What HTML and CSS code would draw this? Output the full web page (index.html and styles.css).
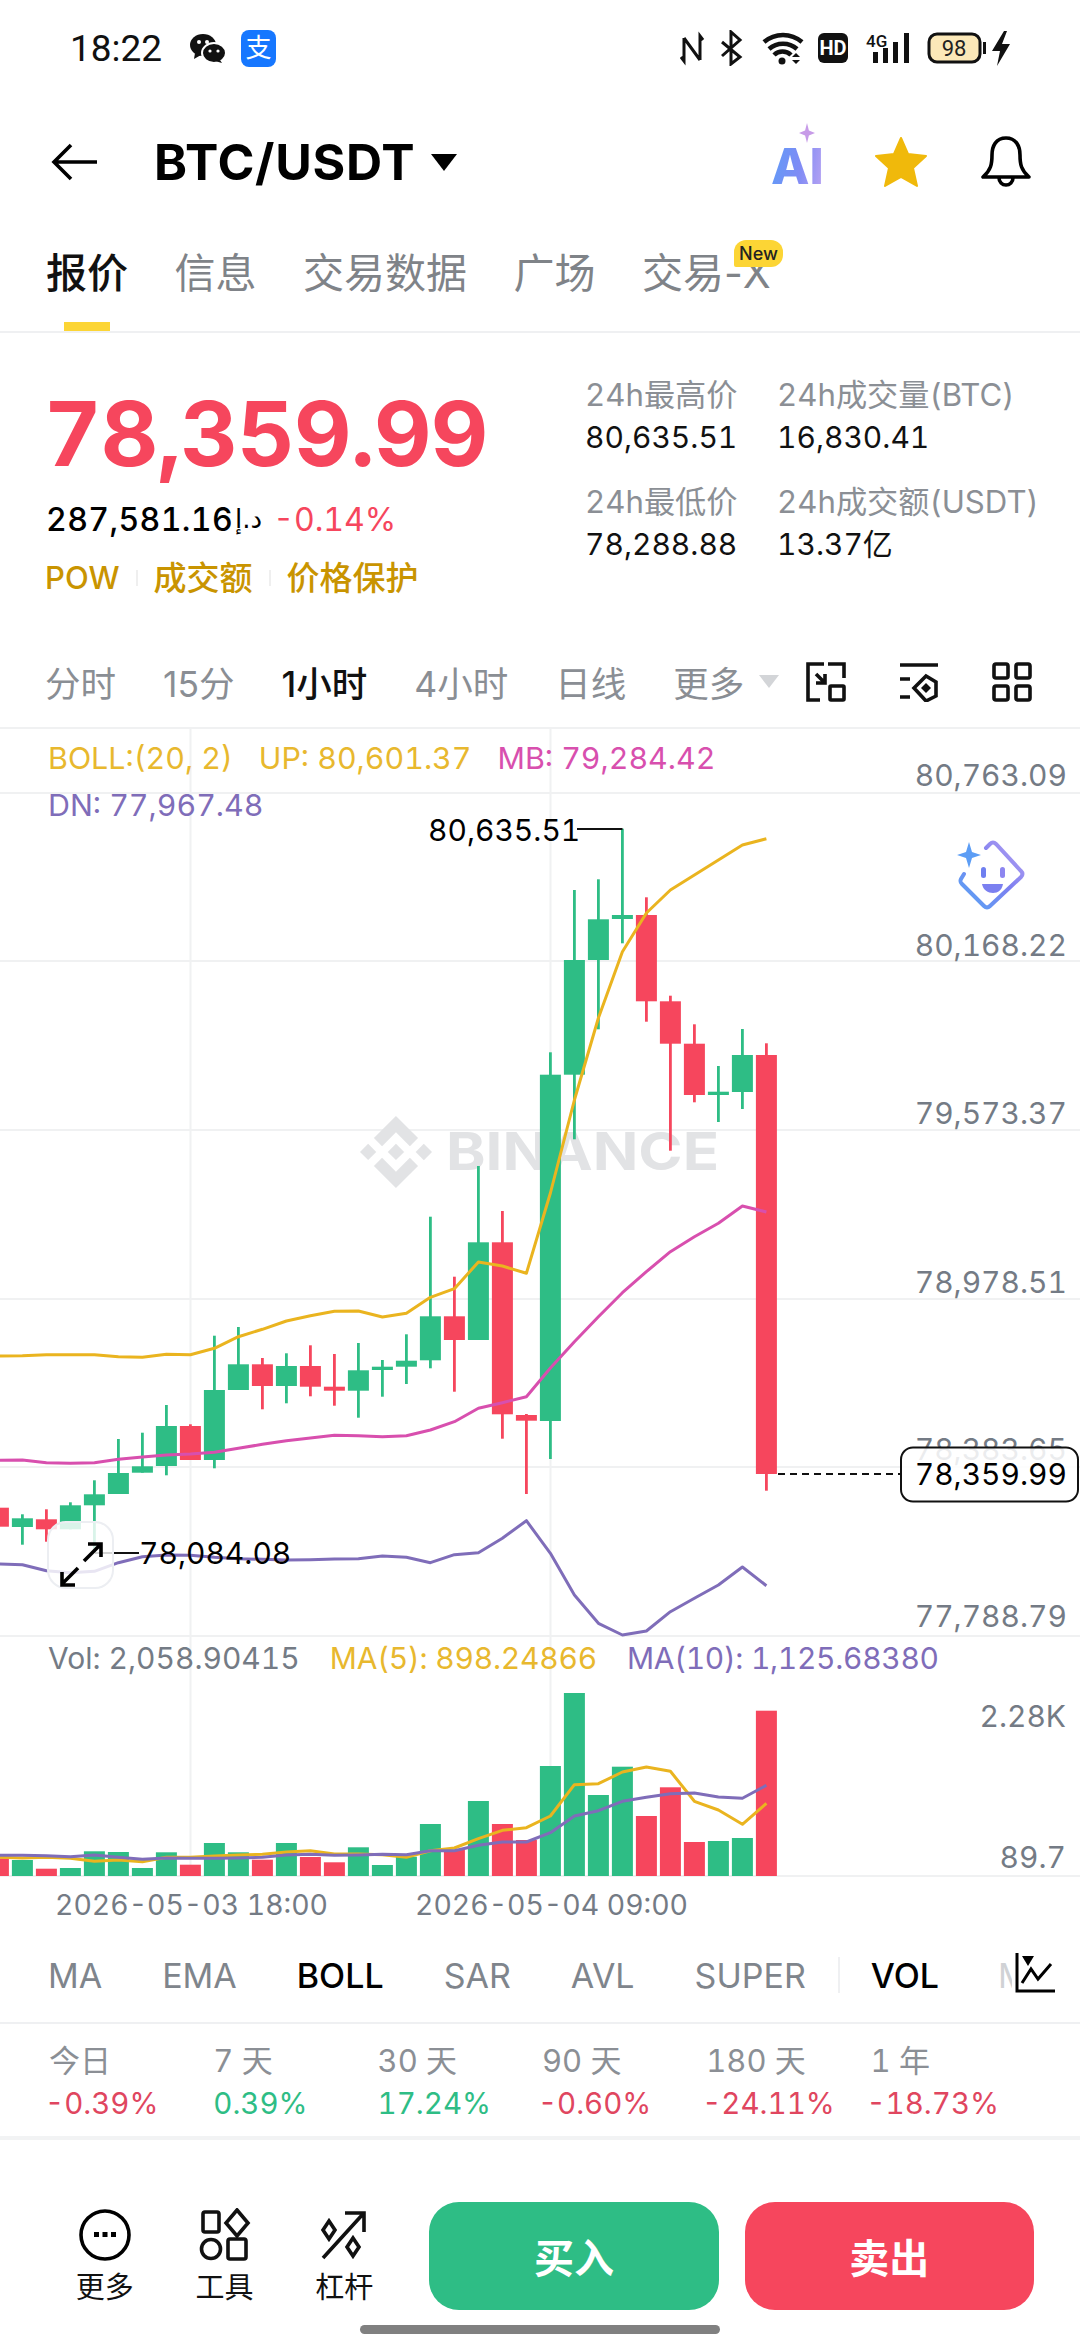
FILE: index.html
```html
<!DOCTYPE html>
<html lang="zh">

<head>
    <meta charset="UTF-8">
    <meta name="viewport" content="width=device-width, initial-scale=1.0">
    <title>BTC/USDT</title>
    <link rel="stylesheet" href="styles.css">
</head>

<body>
    <div class="status-bar">
        <div class="status-left">
            <span class="clock">18:22</span>
            <svg class="wechat" viewBox="0 0 36 30" width="36" height="30">
                <ellipse cx="13" cy="12" rx="13" ry="11" fill="#111" />
                <path d="M5 20l-1 6 7-4z" fill="#111" />
                <ellipse cx="24" cy="20" rx="12" ry="10" fill="#111" stroke="#fff" stroke-width="2" />
                <path d="M30 27l2 3-7-2z" fill="#111" />
                <circle cx="9" cy="9" r="2" fill="#fff" />
                <circle cx="17" cy="9" r="2" fill="#fff" />
                <circle cx="20" cy="18" r="1.6" fill="#fff" />
                <circle cx="28" cy="18" r="1.6" fill="#fff" />
            </svg>
            <span class="alipay">支</span>
        </div>
        <svg class="status-icons" viewBox="680 30 332 36" width="332" height="36">
            <path class="si" d="M684 38v23l-3-4M684 38l16 22M700 60V36l3 4" />
            <path class="si" d="M722 42l18 15-9 7V32l9 8-18 16" />
            <path class="si thick" d="M764 42a29 29 0 0 1 38 0M769 49a21 21 0 0 1 28 0M774 55a12 12 0 0 1 17 0" />
            <circle cx="782" cy="61" r="3.500" fill="#111" />
            <path d="M796 53l4 4h-8zM796 64l4-4h-8z" fill="#111" />
            <rect x="818" y="33" width="30" height="30" rx="6" fill="#111" />
            <text class="hd" x="833" y="55" text-anchor="middle">HD</text>
            <text class="four-g" x="866" y="47">4G</text>
            <path d="M873 52h5v11h-5zM883 48h5v15h-5zM893 42h5v21h-5zM904 33h5v30h-5z" fill="#111" />
            <rect x="929" y="34" width="51" height="28" rx="8" fill="#fbe8b8" stroke="#111" stroke-width="3" />
            <text class="batt" x="954" y="56" text-anchor="middle">98</text>
            <rect x="983" y="42" width="3" height="12" fill="#111" />
            <path d="M1004 31l-12 20h8l-3 15 13-22h-8l5-13z" fill="#111" />
        </svg>
    </div>

    <header class="topbar">
        <svg class="back" viewBox="0 0 48 40" width="48" height="40">
            <path d="M46 20H4M20 3L3 20l17 17" fill="none" stroke="#000" stroke-width="3.6" />
        </svg>
        <h1 class="pair">BTC/USDT</h1>
        <span class="caret"></span>
        <div class="top-actions">
            <span class="ai">AI<i class="ai-spark"></i></span>
            <svg viewBox="0 0 52 50" width="52" height="50">
                <path d="M26 1l7 16 18 2-13 12 4 18-16-9-16 9 4-18L1 19l18-2z" fill="#f0b90b" stroke="#f0b90b" stroke-linejoin="round" stroke-width="2" />
            </svg>
            <svg viewBox="0 0 54 54" width="54" height="54">
                <path d="M27 3c-10 0-14 8-14 17 0 9-1 15-9 22h46c-8-7-9-13-9-22 0-9-4-17-14-17zM20 43a7 7 0 0 0 14 0" fill="none" stroke="#000" stroke-width="3.6" stroke-linejoin="round" />
            </svg>
        </div>
    </header>

    <nav class="tabs">
        <a class="tab active">报价</a>
        <a class="tab">信息</a>
        <a class="tab">交易数据</a>
        <a class="tab">广场</a>
        <a class="tab new">交易-X<span class="new-badge">New</span></a>
    </nav>

    <section class="summary">
        <div class="summary-left">
            <div class="last-price">78,359.99</div>
            <div class="sub-price"><span class="fiat">287,581.16</span><span class="aed">د.إ</span><span class="change">-0.14%</span></div>
            <div class="tags"><span class="pow">POW</span><i></i><span>成交额</span><i></i><span>价格保护</span></div>
        </div>
        <div class="stats">
            <div class="stat"><p>24h最高价</p><b>80,635.51</b></div>
            <div class="stat"><p>24h成交量(BTC)</p><b>16,830.41</b></div>
            <div class="stat"><p>24h最低价</p><b>78,288.88</b></div>
            <div class="stat"><p>24h成交额(USDT)</p><b>13.37亿</b></div>
        </div>
    </section>

    <div class="timeframes">
        <span class="tf first">分时</span>
        <span class="tf">15分</span>
        <span class="tf on">1小时</span>
        <span class="tf">4小时</span>
        <span class="tf">日线</span>
        <span class="tf">更多</span>
        <span class="tf-caret"></span>
        <div class="tf-icons">
            <svg viewBox="0 0 40 40" width="40" height="40">
                <path class="ic" d="M18 2H2v36h12M22 2h16v14M10 12l9 9M19 12v9h-9" />
                <rect class="ic" x="24" y="24" width="14" height="14" rx="1" />
            </svg>
            <svg viewBox="0 0 42 40" width="42" height="40">
                <path class="ic" d="M2 3h38M2 17h10M2 35h10M16 26l12-12 10 6v14l-10 5z" />
                <path d="M28 21l5 5-5 5-5-5z" fill="#111" />
            </svg>
            <svg viewBox="0 0 40 40" width="40" height="40">
                <rect class="ic" x="2" y="2" width="14" height="14" rx="2" />
                <rect class="ic" x="24" y="2" width="14" height="14" rx="2" />
                <rect class="ic" x="2" y="24" width="14" height="14" rx="2" />
                <rect class="ic" x="24" y="24" width="14" height="14" rx="2" />
            </svg>
        </div>
    </div>

    <section class="chart">
        <svg class="canvas" viewBox="0 727 1080 1197" width="1080" height="1197">
            <g class="grid">
                <path d="M0 793H1080M0 961H1080M0 1130H1080M0 1299H1080M0 1467H1080M0 1636H1080M0 1876H1080" />
                <path d="M190.5 727V1876M550.5 727V1876" />
            </g>
            <g class="watermark">
                <path transform="translate(360 1116) scale(3)" d="M16.624 13.9202l2.7175 2.7154-7.353 7.353-7.353-7.352 2.7175-2.7164 4.6355 4.6595 4.6356-4.6595zm4.6366-4.6366L24 12l-2.7154 2.7164L18.5682 12l2.6924-2.7164zm-9.272.001l2.7163 2.6914-2.7164 2.7174v-.001L9.2721 12l2.7164-2.7154zm-9.2722-.001L5.4088 12l-2.6914 2.6924L0 12l2.7164-2.7164zM11.9885.0115l7.353 7.329-2.7174 2.7154-4.6356-4.6356-4.6355 4.6595-2.7174-2.7154 7.353-7.353z" />
                <text x="446" y="1170" textLength="273" lengthAdjust="spacingAndGlyphs">BINANCE</text>
            </g>
            <g id="candles"></g>
            <g id="volumes"></g>
            <g id="lines"></g>

            <text class="axis" x="1067" y="786">80,763.09</text>
            <text class="axis" x="1067" y="956">80,168.22</text>
            <text class="axis" x="1067" y="1124">79,573.37</text>
            <text class="axis" x="1067" y="1293">78,978.51</text>
            <text class="axis" x="1067" y="1460">78,383.65</text>
            <text class="axis" x="1067" y="1627">77,788.79</text>
            <text class="axis" x="1066" y="1727">2.28K</text>
            <text class="axis" x="1066" y="1868">89.7</text>

            <text class="mark" x="428" y="841">80,635.51</text>
            <path class="mark-line" d="M577 829H622.500" />
            <text class="mark" x="139" y="1564">78,084.08</text>
            <path class="mark-line" d="M95 1553H139" />

            <path class="dash" d="M778 1474H900" />
            <rect class="price-tag" x="901" y="1447.500" width="177" height="54" rx="12" />
            <text class="tag-text" x="1067" y="1485">78,359.99</text>

            <rect class="zoom-btn" x="48" y="1522" width="65" height="66" rx="18" />
            <path class="zoom-arrows" d="M84 1561l16-16M88 1544h13v13M78 1568l-16 16M75 1585H62v-13" />

            <g transform="translate(957 841)">
                <defs>
                    <linearGradient id="faceg" x1="0" y1="1" x2="1" y2="0">
                        <stop offset="0" stop-color="#56a6f5" />
                        <stop offset=".55" stop-color="#7d7ff0" />
                        <stop offset="1" stop-color="#b9a3f2" />
                    </linearGradient>
                </defs>
                <path d="M7 33l-3 5c-1 2-1 3 1 5l22 22c2 2 4 2 6 0l31-29c2-2 2-4 0-6L39 3c-2-2-4-2-6 0l-4 4" fill="none" stroke="url(#faceg)" stroke-width="4" stroke-linecap="round" />
                <path d="M12 1l3 10 9 3-9 3-3 10-3-10-9-3 9-3z" fill="#5c9df5" />
                <rect x="24" y="26" width="5" height="11" rx="2.500" fill="#6f7ff0" />
                <rect x="43" y="26" width="5" height="11" rx="2.500" fill="#8d86f0" />
                <path d="M25 43h21c-1 6-5 9-10 9s-10-3-11-9z" fill="#7b80f0" />
            </g>

            <text class="date" x="55" y="1915">2026-05-03 18:00</text>
            <text class="date" x="415" y="1915">2026-05-04 09:00</text>
        </svg>
        <div class="legend">
            <div class="legend-row"><span class="c-gold">BOLL:(20, 2)</span><span class="c-gold">UP: 80,601.37</span><span class="c-pink">MB: 79,284.42</span></div>
            <div class="legend-row"><span class="c-purple">DN: 77,967.48</span></div>
        </div>
        <div class="legend vol-legend">
            <div class="legend-row"><span class="c-gray">Vol: 2,058.90415</span><span class="c-gold">MA(5): 898.24866</span><span class="c-purple">MA(10): 1,125.68380</span></div>
        </div>
    </section>

    <div class="indicators">
        <span class="ind">MA</span>
        <span class="ind">EMA</span>
        <span class="ind on">BOLL</span>
        <span class="ind">SAR</span>
        <span class="ind">AVL</span>
        <span class="ind">SUPER</span>
        <i class="ind-sep"></i>
        <span class="ind on">VOL</span>
        <span class="ind cut">M</span>
        <svg class="ind-icon" viewBox="0 0 42 42" width="42" height="42">
            <path d="M3 1V39H41" fill="none" stroke="#000" stroke-width="3" />
            <path d="M8 31l9-14 7 10 13-15" fill="none" stroke="#000" stroke-width="3" />
            <path d="M8 4h12l-6 10z" fill="#000" />
        </svg>
    </div>

    <div class="periods">
        <div class="period"><p>今日</p><span class="down">-0.39%</span></div>
        <div class="period"><p>7 天</p><span class="up">0.39%</span></div>
        <div class="period"><p>30 天</p><span class="up">17.24%</span></div>
        <div class="period"><p>90 天</p><span class="down">-0.60%</span></div>
        <div class="period"><p>180 天</p><span class="down">-24.11%</span></div>
        <div class="period"><p>1 年</p><span class="down">-18.73%</span></div>
    </div>

    <footer class="bottom">
        <div class="tool">
            <svg viewBox="0 0 54 54" width="54" height="54">
                <circle cx="27" cy="27" r="24" fill="none" stroke="#000" stroke-width="3.600" />
                <path d="M16 24h5v5h-5zM24.500 24h5v5h-5zM33 24h5v5h-5z" fill="#000" />
            </svg>
            <span>更多</span>
        </div>
        <div class="tool">
            <svg viewBox="0 0 54 54" width="54" height="54">
                <rect class="ic" x="5" y="4" width="16" height="20" rx="2" />
                <path class="ic" d="M39 2l11 13-11 13-11-13z" />
                <circle class="ic" cx="13" cy="41" r="9.500" />
                <rect class="ic" x="30" y="31" width="18" height="20" rx="2" />
            </svg>
            <span>工具</span>
        </div>
        <div class="tool">
            <svg viewBox="0 0 54 54" width="54" height="54">
                <path class="ic" d="M6 50L46 6M28 5h19v19" />
                <path class="ic" d="M12 13l6 9-6 9-6-9zM36 30l6 9-6 9-6-9z" />
            </svg>
            <span>杠杆</span>
        </div>
        <button class="trade buy">买入</button>
        <button class="trade sell">卖出</button>
    </footer>
    <div class="home-bar"></div>

    <script src="chart.js"></script>
</body>

</html>
```

FILE: styles.css
```css
* {
    box-sizing: border-box;
}

body {
    margin: 0;
    width: 1080px;
    height: 2340px;
    overflow: hidden;
    background: #fff;
    color: #000;
    font-family: Inter, "Noto Sans CJK SC", sans-serif;
    font-variant-numeric: tabular-nums;
    position: relative;
}

p,
h1 {
    margin: 0;
}

/* status bar */
.status-bar {
    height: 96px;
    padding: 0 68px 0 70px;
    display: flex;
    align-items: center;
    justify-content: space-between;
}

.status-left {
    display: flex;
    align-items: center;
}

.clock {
    font-family: Roboto, sans-serif;
    font-size: 37px;
    color: #111;
    width: 120px;
}

.wechat {
    margin-right: 15px;
}

.alipay {
    width: 35px;
    height: 37px;
    background: #1677ff;
    border-radius: 8px;
    color: #fff;
    font-size: 26px;
    line-height: 36px;
    text-align: center;
}

.si {
    fill: none;
    stroke: #111;
    stroke-width: 3;
}

.si.thick {
    stroke-width: 4.5;
}

.hd {
    font: 700 20px "Roboto", sans-serif;
    fill: #fff;
}

.four-g {
    font: 500 17px "Roboto", sans-serif;
    fill: #111;
}

.batt {
    font: 400 22px "Roboto", sans-serif;
    fill: #222;
}

/* top bar */
.topbar {
    height: 132px;
    padding: 0 47px 0 51px;
    display: flex;
    align-items: center;
}

.pair {
    margin-left: 55px;
    font-size: 50px;
    font-weight: 700;
    letter-spacing: 0.7px;
}

.caret {
    margin-left: 16px;
    border-left: 13px solid transparent;
    border-right: 13px solid transparent;
    border-top: 17px solid #000;
}

.top-actions {
    margin-left: auto;
    display: flex;
    align-items: center;
    gap: 52px;
}

.ai {
    position: relative;
    font-size: 50px;
    font-weight: 800;
    line-height: 50px;
    width: 52px;
    margin-top: 8px;
    background: linear-gradient(100deg, #5e9cf7, #7f8bf5 55%, #b9a3f2);
    -webkit-background-clip: text;
    background-clip: text;
    color: transparent;
}

.ai-spark {
    position: absolute;
    right: 8px;
    top: -18px;
    width: 16px;
    height: 20px;
    background: #c79be8;
    clip-path: polygon(50% 0, 62% 38%, 100% 50%, 62% 62%, 50% 100%, 38% 62%, 0 50%, 38% 38%);
}

/* tabs */
.tabs {
    height: 105px;
    padding: 0 0 0 46px;
    display: flex;
    gap: 46.500px;
    font-variant-numeric: normal;
    border-bottom: 2px solid #eff0f2;
}

.tab {
    position: relative;
    font-size: 41px;
    line-height: 90px;
    color: #7f8388;
    height: 103px;
}

.tab.active {
    color: #111;
    font-weight: 500;
}

.tab.active::after {
    content: "";
    position: absolute;
    left: 18px;
    bottom: 0;
    width: 46px;
    height: 9px;
    background: #fcd535;
}

.new-badge {
    position: absolute;
    right: -12px;
    top: 12px;
    padding: 0 5px;
    height: 27px;
    line-height: 27px;
    font-size: 18px;
    font-weight: 500;
    color: #222;
    background: #fcd535;
    border-radius: 12px 12px 12px 2px;
}

/* price summary */
.summary {
    height: 307px;
    padding: 0 0 0 46px;
    display: flex;
}

.summary-left {
    width: 539px;
    padding-top: 48px;
}

.last-price {
    margin-left: -2px;
    font-size: 89px;
    line-height: 106px;
    font-weight: 700;
    color: #f6465d;
    letter-spacing: -0.8px;
}

.sub-price {
    margin-top: 10px;
    display: flex;
    align-items: center;
    height: 44px;
}

.fiat {
    font-size: 32px;
    font-weight: 500;
    letter-spacing: 0.4px;
}

.aed {
    font-family: "DejaVu Sans", sans-serif;
    font-size: 26px;
    margin: 0 11px 0 2px;
}

.change {
    font-size: 32px;
    color: #f6465d;
}

.tags {
    margin: 15px 0 0 -1px;
    display: flex;
    align-items: center;
    font-size: 33px;
    font-weight: 500;
    line-height: 44px;
    color: #c99400;
}

.tags .pow {
    font-size: 31px;
}

.tags i {
    width: 2px;
    height: 16px;
    margin: 0 16px;
    background: #efefef;
}

.stats {
    display: grid;
    grid-template-columns: 192px auto;
    grid-auto-rows: 107px;
    padding-top: 40px;
}

.stat p {
    font-size: 31.200px;
    line-height: 44px;
    color: #8b8f95;
}

.stat b {
    display: block;
    margin-top: -2px;
    font-size: 30px;
    line-height: 44px;
    font-weight: 400;
    color: #111;
}

/* timeframe row */
.timeframes {
    height: 87px;
    padding: 0 48px 4px 45px;
    display: flex;
    align-items: center;
    font-size: 35.500px;
    font-variant-numeric: normal;
    color: #8a8e94;
}

.tf {
    margin-right: 47px;
    white-space: nowrap;
    flex-shrink: 0;
}

.tf.on {
    color: #111;
    font-weight: 500;
}

.tf:nth-of-type(6) {
    margin-right: 15px;
}

.tf-caret {
    border-left: 10px solid transparent;
    border-right: 10px solid transparent;
    border-top: 13px solid #d3d5d8;
}

.tf-icons {
    margin-left: auto;
    display: flex;
    gap: 52px;
}

.ic {
    fill: none;
    stroke: #111;
    stroke-width: 3.6;
}

/* chart */
.chart {
    position: relative;
    height: 1197px;
    border-top: 2px solid #f0f1f2;
}

.canvas {
    position: absolute;
    left: 0;
    top: -2px;
}

.grid path {
    stroke: #f0f1f2;
    stroke-width: 2;
    fill: none;
}

.watermark {
    fill: #e2e3e5;
}

.watermark text {
    font-size: 52px;
    font-weight: 700;
}

.axis {
    font-size: 30px;
    fill: #747b85;
    text-anchor: end;
}

.mark {
    font-size: 30px;
    fill: #000;
}

.mark-line {
    stroke: #111;
    stroke-width: 2;
}

.dash {
    stroke: #111;
    stroke-width: 2;
    stroke-dasharray: 7 5;
}

.price-tag {
    fill: rgba(255, 255, 255, 0.86);
    stroke: #111;
    stroke-width: 2;
}

.tag-text {
    font-size: 30px;
    fill: #000;
    text-anchor: end;
}

.zoom-btn {
    fill: rgba(255, 255, 255, 0.82);
    stroke: #eceef2;
    stroke-width: 2;
}

.zoom-arrows {
    fill: none;
    stroke: #000;
    stroke-width: 3.600;
}

.date {
    font-size: 28.400px;
    fill: #747b85;
}

.legend {
    position: absolute;
    left: 48px;
    top: 6px;
    font-size: 30.400px;
    line-height: 47px;
}

.legend-row {
    display: flex;
    gap: 26px;
}

.vol-legend {
    top: 906px;
    line-height: 46px;
    font-size: 30px;
}

.vol-legend .legend-row {
    gap: 30px;
}

.vol-legend .c-gold {
    letter-spacing: -0.2px;
}

.vol-legend .c-purple {
    letter-spacing: -0.3px;
}

.c-gold {
    color: #e8b82e;
}

.c-pink {
    color: #d84fae;
}

.c-purple {
    color: #7f6db9;
}

.c-gray {
    color: #747b85;
}

/* indicators */
.indicators {
    position: relative;
    height: 100px;
    padding: 4px 0 0 48px;
    display: flex;
    align-items: center;
    font-size: 34px;
    color: #7f858c;
    border-bottom: 2px solid #eff0f2;
}

.ind {
    margin-right: 60px;
}

.ind.on {
    color: #000;
    font-weight: 500;
}

.ind-sep {
    width: 2px;
    height: 36px;
    margin: 0 31px 0 -28px;
    background: #eff0f2;
}

.ind.cut {
    position: absolute;
    left: 998px;
    margin: 0;
    width: 14px;
    overflow: hidden;
    color: #d0d2d5;
}

.ind-icon {
    position: absolute;
    left: 1014px;
    top: 28px;
}

/* period stats */
.periods {
    height: 116px;
    padding: 15px 0 0 49px;
    display: grid;
    grid-template-columns: repeat(6, 164.300px);
    border-bottom: 4px solid #f2f3f4;
}

.period p {
    font-size: 31px;
    line-height: 44px;
    color: #8b8f95;
}

.period span {
    display: block;
    font-size: 29.500px;
    line-height: 41px;
}

.down {
    margin-left: -4px;
    color: #e0465f;
}

.up {
    color: #2ebd85;
}

/* bottom bar */
.bottom {
    height: 200px;
    padding: 62px 46px 0 45px;
    display: flex;
    align-items: flex-start;
}

.tool {
    width: 120px;
    padding-top: 6px;
    display: flex;
    flex-direction: column;
    align-items: center;
    font-size: 29px;
    line-height: 40px;
    color: #111;
}

.tool span {
    margin-top: 6px;
}

.tool:nth-child(3) {
    margin-right: 25px;
}

.trade {
    width: 290px;
    height: 108px;
    border: 0;
    border-radius: 30px;
    color: #fff;
    font-family: inherit;
    font-size: 40px;
    font-weight: 700;
}

.buy {
    background: #2ebd85;
    margin-right: 26px;
}

.sell {
    background: #f6465d;
}

.home-bar {
    position: absolute;
    left: 360px;
    top: 2325px;
    width: 360px;
    height: 9px;
    border-radius: 5px;
    background: #808080;
}
```

FILE: chart.js
```js
const NS = 'http://www.w3.org/2000/svg';
const GREEN = '#2ebd85';
const RED = '#f6465d';

// x of candle i (i = -1 is the one cut off by the left edge)
const xOf = (i) => 22.4 + 24 * i;

// [bodyTop, bodyBottom, wickTop, wickBottom, isUp], pixel rows of the page
const candles = [
    [1507.7, 1526.7, 1488, 1545, 0],
    [1518.3, 1527, 1514.3, 1544.7, 1],
    [1519.3, 1529.3, 1509.3, 1541.7, 0],
    [1505.3, 1529.3, 1502.3, 1529.3, 1],
    [1494.3, 1505.3, 1480.3, 1551.7, 1],
    [1473, 1494, 1439, 1494, 1],
    [1466.3, 1472.7, 1432.7, 1472.7, 1],
    [1426, 1466, 1405, 1475.3, 1],
    [1426, 1460, 1424.3, 1460, 0],
    [1390, 1460, 1335.7, 1468.3, 1],
    [1364.3, 1390, 1327, 1390, 1],
    [1364.3, 1386, 1358, 1409.3, 0],
    [1366, 1386, 1353.3, 1403.3, 1],
    [1366, 1386.7, 1345.3, 1396.3, 0],
    [1386.7, 1390.7, 1354, 1405.7, 0],
    [1370.3, 1390.7, 1343, 1417.7, 1],
    [1366.7, 1370, 1360, 1396.7, 1],
    [1360.7, 1366.7, 1334.3, 1384, 1],
    [1316.3, 1360.3, 1216.7, 1368.3, 1],
    [1316.3, 1340, 1276.7, 1391.7, 0],
    [1242.3, 1340, 1166, 1340, 1],
    [1242.3, 1414.3, 1211, 1438.7, 0],
    [1415, 1420.7, 1414, 1494, 0],
    [1074.7, 1421, 1052.3, 1459, 1],
    [960, 1074.7, 890, 1139.3, 1],
    [919.3, 960, 879.3, 1029.3, 1],
    [915, 919, 828.7, 943.3, 1],
    [915, 1001.3, 897.3, 1021.7, 0],
    [1001.3, 1043.7, 995.7, 1150.7, 0],
    [1043.7, 1095, 1024.3, 1102.3, 0],
    [1091.7, 1095, 1066, 1122, 1],
    [1055, 1092, 1029, 1109, 1],
    [1055, 1474, 1043.3, 1490.7, 0],
];

const volumes = [
    1858.3, 1860, 1868.7, 1868, 1851.3, 1852, 1868, 1852.3, 1864.7, 1843, 1852.3,
    1859.7, 1843, 1857, 1862.3, 1847.3, 1865, 1856.7, 1824, 1850, 1801, 1824, 1840,
    1766, 1693, 1795, 1766.7, 1816, 1787.3, 1842, 1841, 1838, 1710.7,
];

const lines = [
    // BOLL up
    ['#eab41f', [
        1356, 1355.7, 1354.7, 1354.7, 1354.7, 1356.7, 1357.3, 1354.3, 1354.7, 1348.3, 1336.7,
        1329.3, 1321, 1315.7, 1311.3, 1311, 1317, 1313.3, 1297.3, 1288.7, 1262, 1266, 1273.3,
        1193, 1100, 1018, 951.7, 913, 890, 875, 860, 845, 838.7,
    ]],
    // BOLL mid
    ['#d84fae', [
        1460.3, 1460, 1462.7, 1463.3, 1462.7, 1459.3, 1457, 1455, 1454, 1452.3, 1448.3,
        1444.3, 1440.7, 1438, 1435.3, 1435.7, 1436.7, 1435.7, 1430, 1421.7, 1408.3, 1402.7, 1396.7,
        1368, 1341.7, 1316.7, 1292.7, 1271.7, 1251.7, 1236.7, 1223.3, 1206, 1212,
    ]],
    // BOLL down
    ['#7f6db9', [
        1564, 1564.7, 1570.7, 1572.7, 1571.3, 1562.7, 1556.7, 1555, 1555.3, 1557.3, 1558.7,
        1559.3, 1560, 1559.7, 1559, 1558.7, 1556, 1557.3, 1562.7, 1554.7, 1552.7, 1538.3, 1520.7,
        1553.3, 1595, 1623.3, 1635, 1631, 1611.7, 1598.3, 1585, 1567, 1585.7,
    ]],
    // volume MA5
    ['#eab41f', [
        1857.3, 1858, 1857.3, 1858.3, 1861.3, 1860, 1861.7, 1857.3, 1857.3, 1856, 1855,
        1854.3, 1852, 1850.7, 1854, 1854, 1854.7, 1857.3, 1850.7, 1848, 1838.7, 1830.3, 1827.7,
        1816, 1784.7, 1783.7, 1772, 1767, 1771.3, 1801.3, 1810, 1824.3, 1803.3,
    ]],
    // volume MA10
    ['#7f6db9', [
        1855.3, 1855.3, 1855.7, 1856.7, 1855, 1857.3, 1859.3, 1858, 1858.3, 1858.3, 1858,
        1857.3, 1855, 1854.3, 1855.3, 1855, 1854.3, 1854.7, 1850.7, 1850.7, 1845.3, 1842, 1842,
        1832.7, 1816, 1810.7, 1801.3, 1797.3, 1793.7, 1793, 1797, 1798.3, 1785.3,
    ]],
];

function rect(parent, x, y, w, h, fill) {
    const el = document.createElementNS(NS, 'rect');
    el.setAttribute('x', x);
    el.setAttribute('y', y);
    el.setAttribute('width', w);
    el.setAttribute('height', h);
    el.setAttribute('fill', fill);
    parent.appendChild(el);
}

const candleGroup = document.getElementById('candles');
candles.forEach(([top, bottom, high, low, up], n) => {
    const x = xOf(n - 1);
    const color = up ? GREEN : RED;
    rect(candleGroup, x - 1.4, high, 2.8, low - high, color);
    rect(candleGroup, x - 10.5, top, 21, bottom - top, color);
});

const volumeGroup = document.getElementById('volumes');
volumes.forEach((top, n) => {
    rect(volumeGroup, xOf(n - 1) - 10.5, top, 21, 1876 - top, candles[n][4] ? GREEN : RED);
});

const lineGroup = document.getElementById('lines');
lines.forEach(([color, ys]) => {
    const el = document.createElementNS(NS, 'polyline');
    el.setAttribute('points', ys.map((y, n) => `${xOf(n - 1)},${y}`).join(' '));
    el.setAttribute('fill', 'none');
    el.setAttribute('stroke', color);
    el.setAttribute('stroke-width', 3);
    el.setAttribute('stroke-linejoin', 'round');
    lineGroup.appendChild(el);
});
```
